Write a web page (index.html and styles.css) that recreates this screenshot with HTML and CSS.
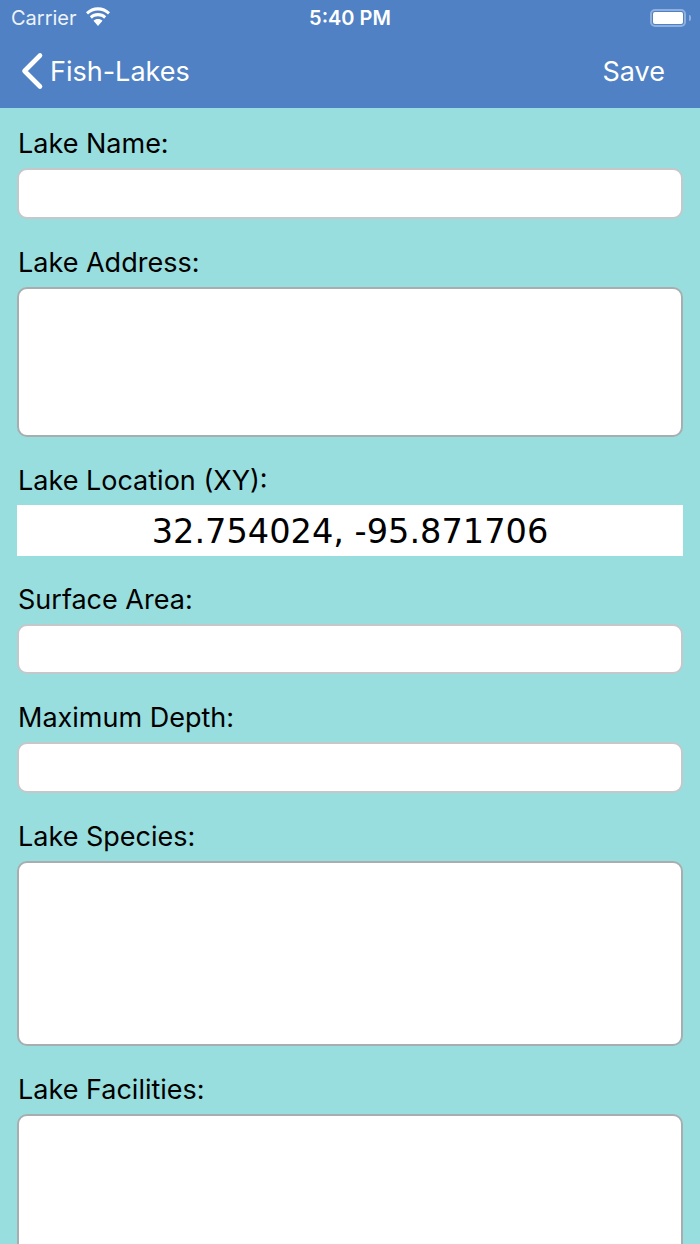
FILE: index.html
```html
<!DOCTYPE html>
<html>
<head>
    <title>Fish-Lakes</title>
    <link rel="stylesheet" href="styles.css">
</head>
<body>
    <div class="screen">
        <div class="header">
            <div class="status-bar">
                <div class="status-left">
                    <span class="carrier">Carrier</span>
                    <svg class="wifi" width="28" height="20" viewBox="0 0 26 19">
                        <path d="M13 3.400c3.600 0 6.900 1.400 9.500 3.800l1.900-2.200C21.400 2 17.400 .2 13 .2S4.600 2 1.600 5l1.900 2.200C6.100 4.800 9.400 3.400 13 3.400z" fill="#fff"/>
                        <path d="M13 8.900c2.200 0 4.200 .8 5.800 2.200l2-2.200C18.600 6.900 15.900 5.800 13 5.800s-5.600 1.100-7.800 3.100l2 2.200c1.600-1.400 3.600-2.200 5.800-2.200z" fill="#fff"/>
                        <path d="M13 11.400c-1.700 0-3.200 .6-4.300 1.700L13 18l4.300-4.900c-1.100-1.100-2.600-1.700-4.300-1.700z" fill="#fff"/>
                    </svg>
                </div>
                <span class="clock">5:40 PM</span>
                <div class="battery">
                    <div class="battery-body"><div class="battery-fill"></div></div>
                    <div class="battery-cap"></div>
                </div>
            </div>
            <div class="nav-bar">
                <div class="back">
                    <svg class="chevron" width="24" height="38" viewBox="0 0 24 38">
                        <path d="M20 3.500L4.500 19 20 34.500" fill="none" stroke="#fff" stroke-width="4.600" stroke-linecap="round" stroke-linejoin="round"/>
                    </svg>
                    <span>Fish-Lakes</span>
                </div>
                <span class="save">Save</span>
            </div>
        </div>

        <div class="form">
            <div class="field">
                <label class="field-label">Lake Name:</label>
                <input class="box box-input" type="text">
            </div>
            <div class="field">
                <label class="field-label">Lake Address:</label>
                <textarea class="box box-address"></textarea>
            </div>
            <div class="field">
                <label class="field-label">Lake Location (XY):</label>
                <div class="location">32.754024, -95.871706</div>
            </div>
            <div class="field">
                <label class="field-label">Surface Area:</label>
                <input class="box box-input" type="text">
            </div>
            <div class="field">
                <label class="field-label">Maximum Depth:</label>
                <input class="box box-input" type="text">
            </div>
            <div class="field">
                <label class="field-label">Lake Species:</label>
                <textarea class="box box-species"></textarea>
            </div>
            <div class="field">
                <label class="field-label">Lake Facilities:</label>
                <textarea class="box box-facilities"></textarea>
            </div>
        </div>
    </div>
</body>
</html>
```

FILE: styles.css
```css
* {
    box-sizing: border-box;
}

html, body {
    margin: 0;
    padding: 0;
}

body {
    font-family: Inter, "Liberation Sans", sans-serif;
    color: #000;
}

.screen {
    width: 700px;
    height: 1244px;
    overflow: hidden;
    background: #98dede;
}

.header {
    height: 108px;
    background: #4f81c4;
    color: #fff;
}

.status-bar {
    height: 35px;
    padding: 0 9px 0 11px;
    display: grid;
    grid-template-columns: 1fr auto 1fr;
    align-items: center;
}

.status-left {
    display: flex;
    align-items: center;
    gap: 7px;
}

.carrier {
    font-size: 20px;
    color: #eef3fa;
}

.wifi {
    margin-bottom: 1px;
}

.clock {
    font-size: 20px;
    font-weight: 600;
    margin-right: 2px;
}

.battery {
    justify-self: end;
    display: flex;
    align-items: center;
    gap: 3px;
}

.battery-body {
    width: 36px;
    height: 18px;
    padding: 1px;
    border: 2px solid #8fb0dc;
    border-radius: 5px;
}

.battery-fill {
    height: 100%;
    background: #fff;
    border-radius: 2px;
}

.battery-cap {
    width: 2px;
    height: 6px;
    background: #8fb0dc;
    border-radius: 0 2px 2px 0;
}

.nav-bar {
    height: 72px;
    padding: 0 35px 0 20px;
    display: flex;
    align-items: center;
    justify-content: space-between;
    font-size: 27px;
}

.back {
    display: flex;
    align-items: center;
    gap: 6px;
}

.form {
    padding: 19px 17px 0;
}

.field-label {
    display: block;
    height: 32px;
    margin-bottom: 9px;
    font-size: 27px;
    line-height: 33px;
    padding-left: 1px;
}

.field {
    margin-bottom: 27px;
}

.box {
    display: block;
    width: 100%;
    background: #fff;
    border: 2px solid #c4c8ca;
    border-radius: 10px;
    outline: none;
    resize: none;
    margin: 0;
}

.box-input {
    height: 50.5px;
}

.box-address {
    height: 150.5px;
    border-color: #a8aeb0;
}

.box-species {
    height: 185px;
    border-color: #a8aeb0;
}

.box-facilities {
    height: 200px;
    border-color: #a8aeb0;
}

.location {
    height: 50.5px;
    background: #fff;
    text-align: center;
    font-family: "DejaVu Sans", sans-serif;
    font-size: 33.6px;
    line-height: 54px;
}
```
